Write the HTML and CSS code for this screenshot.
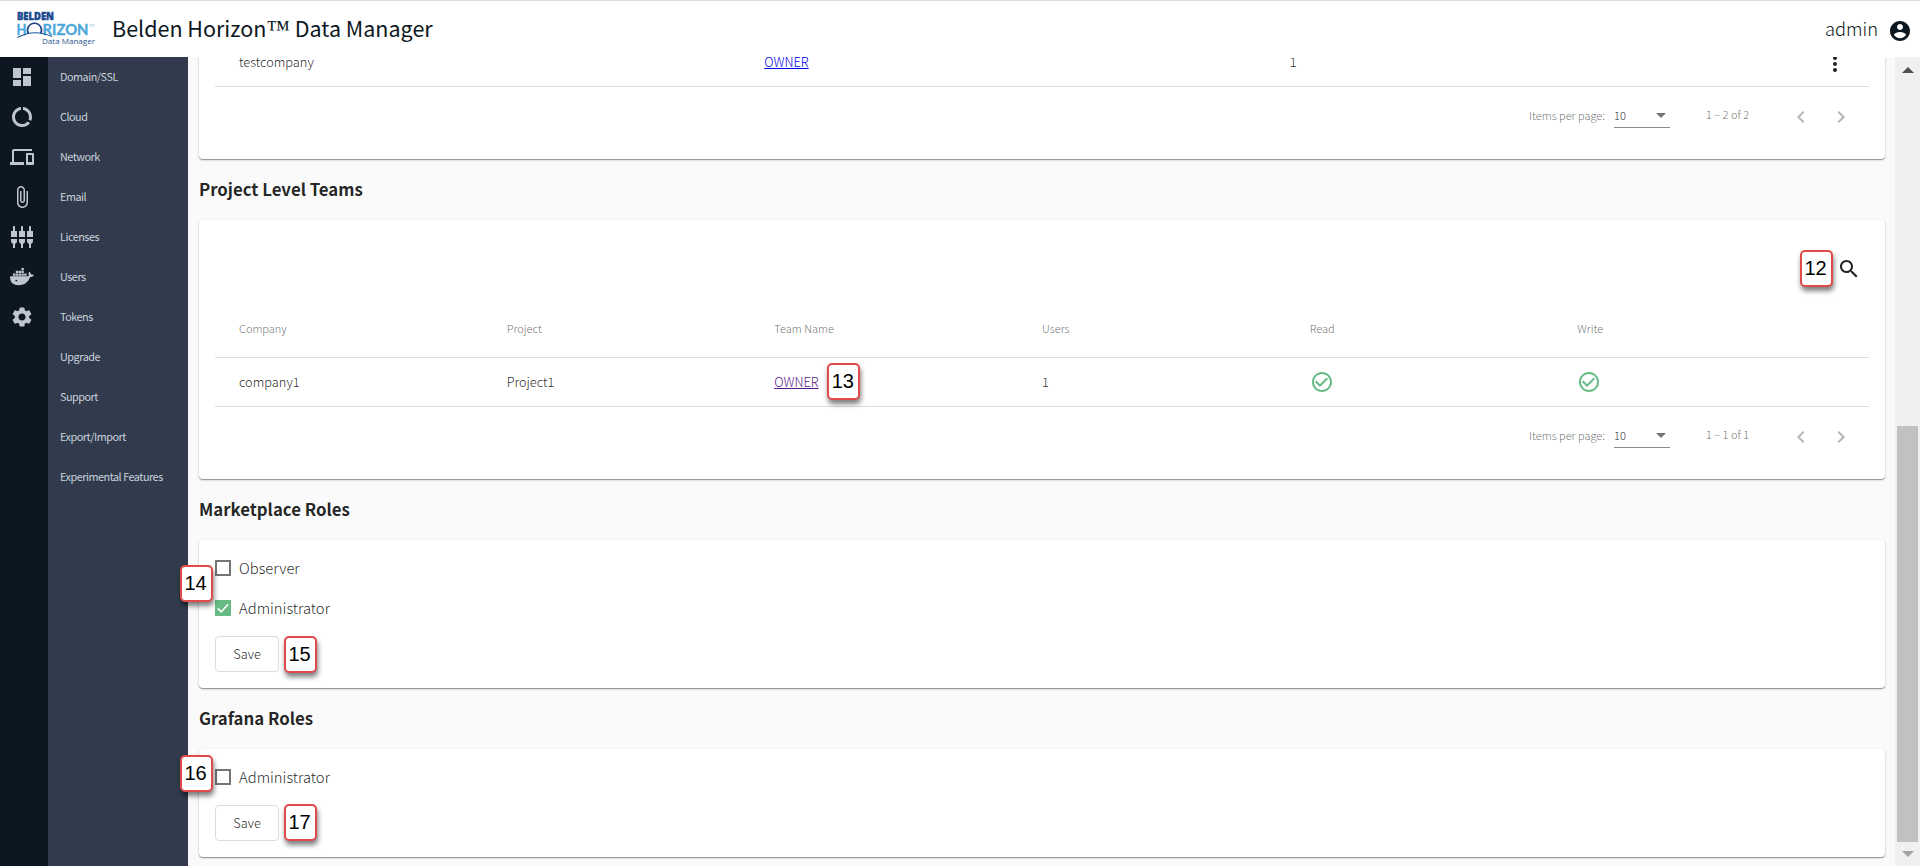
FILE: index.html
```html
<!DOCTYPE html>
<html lang="en">
  <head>
    <title>Belden Horizon Data Manager</title>
    <meta charset="utf-8" />
    <link rel="stylesheet" href="styles.css">
  </head>
  <body>
    <header class="topbar">
      <svg class="logo" width="80" height="36" viewBox="0 0 80 36">
        <text class="logo-brand" x="1" y="8" textLength="37" lengthAdjust="spacingAndGlyphs">BELDEN</text>
        <text class="logo-name" x="0.500" y="22.500" textLength="10" lengthAdjust="spacingAndGlyphs">H</text>
        <text class="logo-name" x="26.500" y="22.500" textLength="46" lengthAdjust="spacingAndGlyphs">RIZON</text>
        <text class="logo-tm" x="73" y="15">TM</text>
        <path d="M12.300 21.500a7 7 0 1 1 12.400 0" fill="none" stroke="#1d4382" stroke-width="1.700" />
        <path d="M1.500 25.500Q18 16.500 36 24.500" fill="none" stroke="#1d5a9c" stroke-width="1.200" />
        <text class="logo-sub" x="26" y="32" textLength="53" lengthAdjust="spacingAndGlyphs">Data Manager</text>
      </svg>
      <h1 class="title">Belden Horizon<span class="tm">™</span> Data Manager</h1>
      <span class="user">admin</span>
      <svg class="icon avatar" viewBox="0 0 24 24"><path d="M12 2C6.48 2 2 6.48 2 12s4.48 10 10 10 10-4.48 10-10S17.52 2 12 2zm0 3c1.66 0 3 1.34 3 3s-1.34 3-3 3-3-1.34-3-3 1.34-3 3-3zm0 14.2c-2.5 0-4.71-1.28-6-3.22.03-1.99 4-3.08 6-3.08 1.99 0 5.97 1.09 6 3.08-1.29 1.94-3.5 3.22-6 3.22z"/></svg>
    </header>

    <div class="layout">
      <nav class="rail">
        <svg class="icon" viewBox="0 0 24 24"><path d="M3 13h8V3H3v10zm0 8h8v-6H3v6zm10 0h8V11h-8v10zm0-18v6h8V3h-8z"/></svg>
        <svg class="icon" viewBox="0 0 24 24"><path d="M13 2.05v3.03c3.39.49 6 3.39 6 6.92 0 .9-.18 1.75-.48 2.54l2.6 1.53c.56-1.24.88-2.62.88-4.07 0-5.18-3.95-9.45-9-9.95zM12 19c-3.87 0-7-3.13-7-7 0-3.53 2.61-6.43 6-6.92V2.05c-5.06.5-9 4.76-9 9.95 0 5.52 4.47 10 9.99 10 3.31 0 6.24-1.61 8.06-4.09l-2.6-1.53C16.17 17.98 14.21 19 12 19z"/></svg>
        <svg class="icon" viewBox="0 0 24 24"><path d="M4 6h18V4H4c-1.1 0-2 .9-2 2v11H0v3h14v-3H4V6zm19 2h-6c-.55 0-1 .45-1 1v10c0 .55.45 1 1 1h6c.55 0 1-.45 1-1V9c0-.55-.45-1-1-1zm-1 9h-4v-7h4v7z"/></svg>
        <svg class="icon" viewBox="0 0 24 24"><path d="M16.5 6v11.5c0 2.21-1.79 4-4 4s-4-1.79-4-4V5c0-1.38 1.12-2.5 2.5-2.5s2.5 1.12 2.5 2.5v10.5c0 .55-.45 1-1 1s-1-.45-1-1V6H10v9.5c0 1.38 1.12 2.5 2.5 2.5s2.5-1.12 2.5-2.5V5c0-2.21-1.79-4-4-4S7 2.79 7 5v12.500c0 3.040 2.460 5.500 5.500 5.500s5.500-2.460 5.500-5.500V6h-1.500z"/></svg>
        <svg class="icon" viewBox="0 0 24 24"><path d="M5 2c0-.55-.45-1-1-1s-1 .45-1 1v4H1v6h6V6H5V2zm4 14c0 1.300.840 2.400 2 2.820V23h2v-4.180c1.160-.410 2-1.510 2-2.820v-2H9v2zm-8 0c0 1.300.840 2.400 2 2.820V23h2v-4.180C6.160 18.400 7 17.300 7 16v-2H1v2zM21 6V2c0-.55-.45-1-1-1s-1 .45-1 1v4h-2v6h6V6h-2zm-8-4c0-.55-.45-1-1-1s-1 .45-1 1v4H9v6h6V6h-2V2zm4 14c0 1.300.840 2.400 2 2.820V23h2v-4.180c1.160-.410 2-1.510 2-2.820v-2h-6v2z"/></svg>
        <svg class="icon" viewBox="0 0 24 24"><path d="M3 8.500h2.400v2.300H3zM5.800 8.500h2.400v2.300H5.800zM8.600 8.500H11v2.300H8.600zM11.400 8.500h2.400v2.300h-2.400zM5.800 5.800h2.400v2.300H5.800zM8.600 5.800H11v2.300H8.600zM11.400 5.800h2.400v2.300h-2.400zM11.400 3h2.400v2.300h-2.400zM14.200 8.500h2.400v2.300h-2.400zM.2 11.300h16.300c1 0 1.900-.2 2.500-.6-.8-1.300-.7-2.800.2-4 1.200.7 1.700 1.700 1.800 2.800 1.100-.2 2.200 0 3 .5-.7 1.500-2 2.100-3.900 2.100C18.300 17.200 14.400 20.200 8.800 20.200 2.800 20.200-.3 17 .2 11.300z"/><circle cx="6.300" cy="15.600" r=".9" fill="#0d1722"/></svg>
        <svg class="icon" viewBox="0 0 24 24"><path d="M19.140 12.940c.04-.3.06-.61.06-.94 0-.32-.02-.64-.07-.94l2.030-1.580c.18-.14.23-.41.12-.61l-1.920-3.320c-.12-.22-.37-.29-.59-.22l-2.390.96c-.5-.38-1.030-.7-1.620-.94l-.36-2.540c-.04-.24-.24-.41-.48-.41h-3.840c-.24 0-.43.17-.47.41l-.36 2.540c-.59.24-1.130.57-1.620.94l-2.390-.96c-.22-.08-.47 0-.59.22L2.740 8.870c-.12.21-.08.47.12.61l2.030 1.580c-.05.3-.09.63-.09.94s.02.64.07.94l-2.030 1.580c-.18.14-.23.41-.12.61l1.920 3.320c.12.22.37.29.59.22l2.390-.96c.5.38 1.030.7 1.620.94l.36 2.540c.05.24.24.41.48.41h3.840c.24 0 .44-.17.47-.41l.36-2.540c.59-.24 1.130-.56 1.620-.94l2.390.96c.22.08.47 0 .59-.22l1.920-3.320c.12-.22.07-.47-.12-.61l-2.010-1.580zM12 15.600c-1.980 0-3.600-1.620-3.600-3.600s1.620-3.600 3.600-3.600 3.600 1.620 3.600 3.600-1.620 3.600-3.600 3.600z"/></svg>
      </nav>

      <nav class="menu">
        <a>Domain/SSL</a>
        <a>Cloud</a>
        <a>Network</a>
        <a>Email</a>
        <a>Licenses</a>
        <a>Users</a>
        <a>Tokens</a>
        <a>Upgrade</a>
        <a>Support</a>
        <a>Export/Import</a>
        <a>Experimental Features</a>
      </nav>

      <main class="content">
        <section class="card card-first">
          <div class="row row-top">
            <span class="cell">testcompany</span>
            <span class="cell"><a class="link">OWNER</a></span>
            <span class="cell">1</span>
            <span class="more"><svg class="icon" viewBox="0 0 24 24"><path d="M12 8c1.100 0 2-.9 2-2s-.9-2-2-2-2 .9-2 2 .9 2 2 2zm0 2c-1.100 0-2 .9-2 2s.9 2 2 2 2-.9 2-2-.9-2-2-2zm0 6c-1.100 0-2 .9-2 2s.9 2 2 2 2-.9 2-2-.9-2-2-2z"/></svg></span>
          </div>
          <div class="paginator">
            <span class="per-page">Items per page:</span>
            <span class="select">10</span>
            <span class="range">1 – 2 of 2</span>
            <svg class="icon" viewBox="0 0 24 24"><path d="M15.410 7.410L14 6l-6 6 6 6 1.410-1.410L10.830 12z"/></svg>
            <svg class="icon" viewBox="0 0 24 24"><path d="M10 6L8.590 7.410 13.170 12l-4.580 4.590L10 18l6-6z"/></svg>
          </div>
        </section>

        <h2>Project Level Teams</h2>
        <section class="card">
          <div class="toolbar">
            <span class="anchor"><span class="badge badge-left">12</span>
            <svg class="icon" viewBox="0 0 24 24"><path d="M15.500 14h-.790l-.280-.270C15.410 12.590 16 11.110 16 9.500 16 5.910 13.090 3 9.500 3S3 5.910 3 9.500 5.910 16 9.500 16c1.610 0 3.090-.590 4.230-1.570l.270.280v.790l5 4.990L20.490 19l-4.990-5zm-6 0C7.010 14 5 11.990 5 9.500S7.010 5 9.500 5 14 7.010 14 9.500 11.990 14 9.500 14z"/></svg></span>
          </div>
          <div class="row row-head">
            <span class="cell">Company</span>
            <span class="cell">Project</span>
            <span class="cell">Team Name</span>
            <span class="cell">Users</span>
            <span class="cell">Read</span>
            <span class="cell">Write</span>
          </div>
          <div class="row">
            <span class="cell">company1</span>
            <span class="cell">Project1</span>
            <span class="cell"><span class="anchor"><a class="link visited">OWNER</a><span class="badge badge-team">13</span></span></span>
            <span class="cell">1</span>
            <span class="cell"><svg class="icon check" viewBox="0 0 24 24"><path d="M16.590 7.580L10 14.170l-3.590-3.580L5 12l5 5 8-8zM12 2C6.480 2 2 6.480 2 12s4.480 10 10 10 10-4.480 10-10S17.520 2 12 2zm0 18c-4.420 0-8-3.580-8-8s3.580-8 8-8 8 3.580 8 8-3.580 8-8 8z"/></svg></span>
            <span class="cell"><svg class="icon check" viewBox="0 0 24 24"><path d="M16.590 7.580L10 14.170l-3.590-3.580L5 12l5 5 8-8zM12 2C6.480 2 2 6.480 2 12s4.480 10 10 10 10-4.480 10-10S17.520 2 12 2zm0 18c-4.420 0-8-3.580-8-8s3.580-8 8-8 8 3.580 8 8-3.580 8-8 8z"/></svg></span>
          </div>
          <div class="paginator">
            <span class="per-page">Items per page:</span>
            <span class="select">10</span>
            <span class="range">1 – 1 of 1</span>
            <svg class="icon" viewBox="0 0 24 24"><path d="M15.410 7.410L14 6l-6 6 6 6 1.410-1.410L10.830 12z"/></svg>
            <svg class="icon" viewBox="0 0 24 24"><path d="M10 6L8.590 7.410 13.170 12l-4.580 4.590L10 18l6-6z"/></svg>
          </div>
        </section>

        <h2>Marketplace Roles</h2>
        <section class="card roles">
          <label class="option"><span class="box"></span>Observer</label>
          <label class="option"><span class="box checked"><svg width="16" height="16" viewBox="0 0 16 16"><path d="M2.700 8.400l3.500 3.400 7-7.600"/></svg></span>Administrator</label>
          <span class="badge badge-market">14</span>
          <span class="anchor"><button class="save">Save</button><span class="badge badge-save">15</span></span>
        </section>

        <h2>Grafana Roles</h2>
        <section class="card roles">
          <label class="option"><span class="box"></span>Administrator</label>
          <span class="badge badge-grafana">16</span>
          <span class="anchor"><button class="save">Save</button><span class="badge badge-save badge-up">17</span></span>
        </section>
      </main>

      <div class="scrollbar">
        <div class="arrow-up"></div>
        <div class="thumb"></div>
        <div class="arrow-down"></div>
      </div>
    </div>
  </body>
</html>
```
FILE: styles.css
```css
* {
  box-sizing: border-box;
}

body {
  margin: 0;
  height: 866px;
  overflow: hidden;
  display: flex;
  flex-direction: column;
  font-family: "Noto Sans CJK SC", "Noto Sans", sans-serif;
  font-weight: 300;
  font-size: 12.8px;
  line-height: 20px;
  color: rgba(0, 0, 0, 0.87);
  background: #fafafa;
}

.icon {
  display: block;
  flex: none;
  width: 24px;
  height: 24px;
  fill: currentColor;
}

/* header */
.topbar {
  flex: none;
  display: flex;
  align-items: center;
  height: 57px;
  padding: 0 8px 0 16px;
  border-top: 1px solid #dadada;
  background: #fff;
  color: #0d1722;
}

.logo {
  flex: none;
  margin-top: 2px;
  overflow: visible;
  font-family: "Open Sans", sans-serif;
}

.logo-brand {
  font-size: 10.5px;
  font-weight: 800;
  fill: #1b4b8f;
  stroke: #1b4b8f;
  stroke-width: 0.5px;
}

.logo-name {
  font-family: Lato, sans-serif;
  font-size: 14.5px;
  font-weight: 700;
  fill: #4ba6da;
  stroke: #4ba6da;
  stroke-width: 0.3px;
}

.logo-tm {
  font-size: 4px;
  fill: #4ba6da;
}

.logo-sub {
  font-size: 8px;
  font-weight: 400;
  fill: #2b5592;
}

.title {
  margin: -2px auto 0 16px;
  font-size: 21.5px;
  font-weight: 400;
  line-height: 32px;
  white-space: nowrap;
}

.tm {
  font-family: "Liberation Serif", serif;
  font-size: 24px;
}

.user {
  margin: -2px 10px 0 0;
  font-size: 18.3px;
}

.avatar {
  margin-top: 4px;
}

/* side menus */
.layout {
  flex: 1;
  display: flex;
  min-height: 0;
}

.rail {
  flex: none;
  display: flex;
  flex-direction: column;
  gap: 16px;
  width: 48px;
  padding: 8px 10px;
  background: #0d1722;
  color: #c0c6d0;
}

.menu {
  flex: none;
  display: flex;
  flex-direction: column;
  width: 140px;
  padding-left: 12px;
  background: #313b4d;
  color: #c9d2dc;
  font-size: 10.8px;
  font-weight: 400;
  letter-spacing: -0.46px;
  line-height: 40px;
  white-space: nowrap;
}

.menu a {
  height: 40px;
  line-height: 38px;
}

/* content */
.content {
  flex: 1;
  min-width: 0;
  padding: 0 10px 0 11px;
}

h2 {
  margin: 0;
  height: 61px;
  font-size: 16.8px;
  font-weight: 700;
  line-height: 60px;
}

.card {
  position: relative;
  padding: 16px;
  border-radius: 4px;
  background: #fff;
  box-shadow: 0 1px 1px rgba(0, 0, 0, 0.35), 0 1px 3px rgba(0, 0, 0, 0.16);
}

.card-first {
  padding-top: 0;
  border-radius: 0 0 4px 4px;
  clip-path: inset(0 -4px -4px -4px);
}

.toolbar {
  display: flex;
  align-items: center;
  justify-content: flex-end;
  height: 65px;
  padding-right: 8px;
}

.anchor {
  position: relative;
  display: inline-block;
}

.row {
  display: flex;
  align-items: center;
  height: 49px;
  padding: 0 24px;
  border-bottom: 1px solid #dcdcdc;
}

.row-top {
  height: 30px;
  padding-right: 14px;
  align-items: flex-start;
}

.row-top .cell {
  margin-top: -5px;
}

.row-head {
  height: 57px;
  padding-bottom: 2px;
  font-size: 11px;
  color: rgba(0, 0, 0, 0.6);
}

.cell {
  flex: 1;
}

.more {
  width: 40px;
  margin-top: -5px;
  padding-left: 8px;
}

.link {
  color: #0000ee;
  text-decoration: underline;
}

.visited {
  color: #551a8b;
}

.check {
  color: #66bb84;
}

.paginator {
  display: flex;
  align-items: center;
  justify-content: flex-end;
  height: 56px;
  padding-right: 16px;
  font-size: 11px;
  color: rgba(0, 0, 0, 0.6);
}

.paginator .icon {
  margin: 4px 0 0 16px;
  color: #b5b5b5;
}

.range {
  width: 67px;
  margin-top: -2px;
}

.select {
  display: flex;
  justify-content: space-between;
  align-items: center;
  width: 56px;
  height: 24px;
  margin: 1px 36px 0 9px;
  border-bottom: 1px solid #8c8c8c;
  color: rgba(0, 0, 0, 0.87);
}

.select::after {
  content: "";
  margin-right: 4px;
  border: 5px solid transparent;
  border-top-color: #757575;
  border-bottom: 0;
}

/* role forms */
.roles {
  display: flex;
  flex-direction: column;
  align-items: flex-start;
  gap: 16px;
}

.option {
  display: flex;
  align-items: center;
  gap: 8px;
  height: 24px;
  font-size: 14.8px;
}

.box {
  width: 16px;
  height: 16px;
  border: 2px solid #757575;
}

.checked {
  border: 0;
  background: #66bb84;
}

.checked svg {
  display: block;
  fill: none;
  stroke: #fff;
  stroke-width: 1.6px;
}

.save {
  display: block;
  width: 64px;
  height: 36px;
  padding: 0;
  border: 1px solid #dcdcdc;
  border-radius: 4px;
  background: #fff;
  color: inherit;
  font: inherit;
}

/* callout numbers */
.badge {
  position: absolute;
  z-index: 2;
  width: 33px;
  height: 37px;
  padding-right: 2px;
  border: 2px solid #e04a4a;
  border-radius: 5px;
  background: #fff;
  box-shadow: 1px 4px 5px rgba(0, 0, 0, 0.5);
  color: #000;
  font-family: "Liberation Sans", Arial, sans-serif;
  font-size: 20px;
  font-weight: 400;
  line-height: 32px;
  text-align: center;
}

.badge-left {
  right: 28px;
  top: -7px;
}

.badge-team {
  left: 53px;
  top: -9px;
}

.badge-save {
  left: 69px;
  top: 0;
}

.badge-up {
  top: -1px;
}

.badge-market {
  left: -19px;
  top: 25px;
}

.badge-grafana {
  left: -19px;
  top: 6px;
}

/* scrollbar */
.scrollbar {
  flex: none;
  display: flex;
  flex-direction: column;
  align-items: center;
  width: 25px;
  padding: 10px 0 9px;
  background: #f0f0f0;
}

.arrow-up {
  border: 6px solid transparent;
  border-top: 0;
  border-bottom-color: #505050;
}

.thumb {
  width: 21px;
  height: 416px;
  margin: auto 0 9px;
  background: #c1c1c1;
}

.arrow-down {
  border: 6px solid transparent;
  border-bottom: 0;
  border-top-color: #a3a3a3;
}
```
